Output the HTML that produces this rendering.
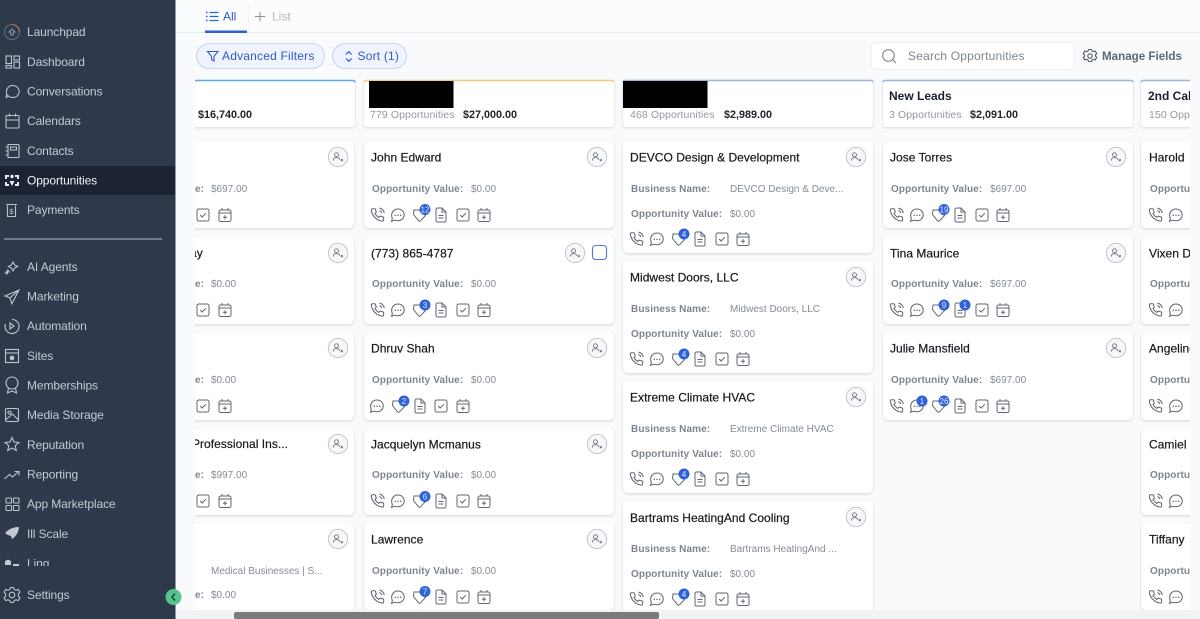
<!DOCTYPE html>
<html><head><meta charset="utf-8"><title>Opportunities</title>
<style>
html,body{margin:0;padding:0;width:1200px;height:619px;overflow:hidden;background:#f8fafc}
svg{position:absolute;left:0;top:0;display:block}
text{font-family:"Liberation Sans",sans-serif}
.s{font-size:12px;fill:#c3cad4;letter-spacing:-.1px}
.sa{font-size:12px;fill:#f2f4f7;letter-spacing:-.1px}
.n{font-size:12px;fill:#16181d;letter-spacing:.03px;stroke:#16181d;stroke-width:.2px}
.l{font-size:10px;font-weight:bold;fill:#7d8590;letter-spacing:.1px}
.v{font-size:10px;fill:#858c96}
.c{font-size:10.5px;fill:#9298a1;letter-spacing:.1px}
.m{font-size:10.8px;font-weight:bold;fill:#20242b}
.h{font-size:12px;font-weight:bold;fill:#1c2130}
.b{font-size:8px;fill:#dfe8ff;text-anchor:middle}
.f{font-size:12px;fill:#2f5cc9;letter-spacing:.2px}
.i{fill:none;stroke:#5d6673;stroke-width:1}
.si{fill:none;stroke:#bcc4cf;stroke-width:1.1}
</style></head><body>
<svg width="1200" height="619" viewBox="0 0 1200 619" xmlns="http://www.w3.org/2000/svg">
<defs>
<filter id="sh" x="-5%" y="-10%" width="110%" height="125%"><feDropShadow dx="0" dy="1" stdDeviation="1.4" flood-color="#1f2a3c" flood-opacity=".16"/></filter>
<clipPath id="bd"><rect x="195" y="76" width="995" height="536"/></clipPath>
<clipPath id="sb"><rect x="0" y="0" width="175" height="566"/></clipPath>
<g id="ph"><path transform="translate(-7 -7.5) scale(.62)" stroke-width="1.7" d="M15.05 5A5 5 0 0 1 19 8.95M15.05 1A9 9 0 0 1 23 8.94m-1 7.98v3a2 2 0 0 1-2.18 2 19.79 19.79 0 0 1-8.63-3.07 19.5 19.5 0 0 1-6-6 19.79 19.79 0 0 1-3.07-8.67A2 2 0 0 1 4.11 2h3a2 2 0 0 1 2 1.72 12.84 12.84 0 0 0 .7 2.81 2 2 0 0 1-.45 2.11L8.09 9.91a16 16 0 0 0 6 6l1.27-1.27a2 2 0 0 1 2.11-.45 12.84 12.84 0 0 0 2.81.7A2 2 0 0 1 22 16.92z"/></g>
<g id="ch"><path transform="scale(1.15)" stroke-width=".9" d="M0-5.2a5.3 5 0 0 1 0 10.2c-1 0-1.900-.2-2.700-.5L-5.600 5.500l.7-2.500a5 5 0 0 1-.6-2.500A5.400 5.400 0 0 1 0-5.200z"/><path d="M-2.700 .3h.01M0 .3h.01M2.700 .3h.01" stroke-width="1.500" stroke-linecap="round"/></g>
<g id="tg"><path d="M-6-5h5.500l6 5.500-5 5.300a1.500 1.500 0 0 1-2 0L-6.500-.5z"/></g>
<g id="dc"><path d="M-5-5.500a1.500 1.500 0 0 1 1.500-1.500H1l4 4v8.500A1.500 1.500 0 0 1 3.500 7h-7A1.500 1.500 0 0 1-5 5.500zM1-7v4h4M-2.500 0.500h5M-2.500 3h5"/></g>
<g id="ck"><rect x="-6" y="-6" width="12" height="12" rx="1.800"/><path d="M-2.800 0l2 2 3.600-3.800"/></g>
<g id="cl"><rect x="-6" y="-5" width="12" height="11.500" rx="1.800"/><path d="M-6-2h12M-3-7v2.500M3-7v2.500M0 .2v4M-2 2.200h4"/></g>
<g id="row" class="i"><use href="#ph" x="0"/><use href="#ch" x="21"/><use href="#tg" x="43"/><use href="#dc" x="64"/><use href="#ck" x="86"/><use href="#cl" x="107"/></g>
<g id="u"><circle r="9.700" fill="#f6f7f9" stroke="#bdc1c8" stroke-width=".9"/><circle cx="-1.500" cy="-2.200" r="2" fill="none" stroke="#6d7582" stroke-width=".9"/><path d="M-4.800 3.600c.3-2.200 1.600-3 3.300-3s2.900.8 3.300 2.100" fill="none" stroke="#6d7582" stroke-width=".9"/><path d="M2.800 2.200l2 2M4.800 2.200l-2 2" stroke="#6d7582" stroke-width=".9"/></g>
</defs>

<!-- main top -->
<rect x="175" width="1025" height="619" fill="#f8fafc"/>
<rect x="175" width="1025" height="32" fill="#fbfcfe"/>
<rect x="175" y="32" width="1025" height="1" fill="#e6e9ee"/>
<g stroke="#2f62d0" stroke-width="1.300" fill="none"><path d="M209.500 12.500h9M209.500 16.500h9M209.500 20.500h9"/></g>
<path d="M206 12.500h1.500M206 16.500h1.500M206 20.500h1.500" stroke="#2f62d0" stroke-width="1.500"/>
<text x="223" y="20.500" style="font-size:12px;fill:#2f5cc9">All</text>
<rect x="205" y="30.500" width="42" height="2.500" fill="#2f62d0"/>
<rect x="248" y="5" width="1" height="27" fill="#f1f3f6"/>
<path d="M260 11.500v10M255 16.500h10" stroke="#8a9099" stroke-width="1" fill="none"/>
<text x="272" y="20.500" style="font-size:12px;fill:#b4b8bf">List</text>

<rect x="196.500" y="43.500" width="128" height="25" rx="12.500" fill="#eef3fd" stroke="#c5d3f2"/>
<path d="M207.500 51.500h10.500l-4 4.800v4.700l-2.500-1.500v-3.200z" fill="none" stroke="#2f5cc9" stroke-width="1.100"/>
<text x="222" y="60" class="f">Advanced Filters</text>
<rect x="332.500" y="43.500" width="74" height="25" rx="12.500" fill="#eef3fd" stroke="#c5d3f2"/>
<path d="M346 54.500l2.800-2.800 2.800 2.800M346 58.500l2.800 2.800 2.800-2.800" fill="none" stroke="#2f5cc9" stroke-width="1.200"/>
<text x="357.500" y="60" class="f">Sort (1)</text>

<rect x="871.500" y="42.500" width="203" height="27" rx="5" fill="#fff" stroke="#eef0f4"/>
<circle cx="888.500" cy="55.500" r="5.800" fill="none" stroke="#7d8590" stroke-width="1.100"/><path d="M892.800 59.800l3.200 3.200" stroke="#7d8590" stroke-width="1.100"/>
<text x="908" y="60" style="font-size:12px;fill:#7d8590;letter-spacing:.2px">Search Opportunities</text>
<g fill="none" stroke="#555e6c" stroke-width="1.100"><circle cx="1090" cy="56" r="2.200"/><path d="M1088.500 49.500h3l.5 1.600 1.600.7 1.500-.8 1.700 2.600-1.300 1.100v1.600l1.300 1.100-1.700 2.600-1.500-.8-1.600.7-.5 1.600h-3l-.5-1.600-1.600-.7-1.500.8-1.700-2.600 1.300-1.100v-1.600l-1.300-1.100 1.700-2.600 1.500.8 1.600-.7z"/></g>
<text x="1102" y="60" style="font-size:11.6px;font-weight:bold;fill:#5f6876">Manage Fields</text>

<!-- board -->
<g clip-path="url(#bd)">
<g fill="#fff" filter="url(#sh)">
<rect x="150" y="80" width="205" height="47" rx="3"/><rect x="364" y="80" width="250" height="47" rx="3"/><rect x="623" y="80" width="250" height="47" rx="3"/><rect x="883" y="80" width="250" height="47" rx="3"/><rect x="1141" y="80" width="120" height="47" rx="3"/>
<rect x="150" y="141" width="204" height="87" rx="5"/><rect x="150" y="236" width="204" height="88" rx="5"/><rect x="150" y="332" width="204" height="88" rx="5"/><rect x="150" y="428" width="204" height="87" rx="5"/><rect x="150" y="523" width="204" height="110" rx="5"/>
<rect x="364" y="141" width="250" height="87" rx="5"/><rect x="364" y="236" width="250" height="88" rx="5"/><rect x="364" y="332" width="250" height="88" rx="5"/><rect x="364" y="428" width="250" height="87" rx="5"/><rect x="364" y="523" width="250" height="87" rx="5"/>
<rect x="623" y="141" width="250" height="112" rx="5"/><rect x="623" y="261" width="250" height="112" rx="5"/><rect x="623" y="381" width="250" height="112" rx="5"/><rect x="623" y="501" width="250" height="130" rx="5"/>
<rect x="883" y="141" width="250" height="87" rx="5"/><rect x="883" y="236" width="250" height="88" rx="5"/><rect x="883" y="332" width="250" height="88" rx="5"/>
<rect x="1141" y="141" width="120" height="87" rx="5"/><rect x="1141" y="236" width="120" height="88" rx="5"/><rect x="1141" y="332" width="120" height="88" rx="5"/><rect x="1141" y="428" width="120" height="87" rx="5"/><rect x="1141" y="523" width="120" height="87" rx="5"/>
</g>
<path d="M150 80.500H353a2 2 0 0 1 2 2" fill="none" stroke="#5aa8e2" stroke-width="1.500"/>
<path d="M364 82.500a2 2 0 0 1 2-2H612a2 2 0 0 1 2 2" fill="none" stroke="#efcd80" stroke-width="1.500"/>
<path d="M623 82.500a2 2 0 0 1 2-2H871a2 2 0 0 1 2 2" fill="none" stroke="#a4b2d8" stroke-width="1.500"/>
<path d="M883 82.500a2 2 0 0 1 2-2H1131a2 2 0 0 1 2 2" fill="none" stroke="#a4b2d8" stroke-width="1.500"/>
<path d="M1141 82.500a2 2 0 0 1 2-2H1261" fill="none" stroke="#a4b2d8" stroke-width="1.500"/>
<rect x="369" y="81" width="84.500" height="27" fill="#000"/><rect x="623" y="81" width="84.500" height="27" fill="#000"/>

<text x="198" y="118" class="m">$16,740.00</text>
<text x="370" y="118" class="c">779 Opportunities</text><text x="463" y="118" class="m">$27,000.00</text>
<text x="630" y="118" class="c">468 Opportunities</text><text x="724" y="118" class="m">$2,989.00</text>
<text x="889" y="100" class="h">New Leads</text><text x="889" y="118" class="c">3 Opportunities</text><text x="970" y="118" class="m">$2,091.00</text>
<text x="1148" y="100" class="h">2nd Call</text><text x="1149" y="118" class="c">150 Opportunities</text>

<!-- col 1 -->
<use href="#u" x="338" y="157"/><use href="#u" x="338" y="253"/><use href="#u" x="338" y="348"/><use href="#u" x="338" y="444"/><use href="#u" x="338" y="539"/>
<text x="190" y="257" class="n">ay</text><text x="192" y="448" class="n">Professional Ins...</text>
<text x="195" y="192" class="l">e:</text><text x="211" y="192" class="v">$697.00</text>
<text x="195" y="287" class="l">e:</text><text x="211" y="287" class="v">$0.00</text>
<text x="195" y="383" class="l">e:</text><text x="211" y="383" class="v">$0.00</text>
<text x="195" y="478" class="l">e:</text><text x="211" y="478" class="v">$997.00</text>
<text x="211" y="574" class="v">Medical Businesses | S...</text>
<text x="195" y="598" class="l">e:</text><text x="211" y="598" class="v">$0.00</text>
<g class="i"><use href="#ck" x="203" y="215"/><use href="#cl" x="225" y="215"/><use href="#ck" x="203" y="310"/><use href="#cl" x="225" y="310"/><use href="#ck" x="203" y="406"/><use href="#cl" x="225" y="406"/><use href="#ck" x="203" y="501"/><use href="#cl" x="225" y="501"/></g>

<!-- col 2 -->
<text x="371" y="161.500" class="n">John Edward</text><use href="#u" x="597" y="157"/>
<text x="372" y="192" class="l">Opportunity Value:</text><text x="471" y="192" class="v">$0.00</text><use href="#row" x="377" y="215"/>
<text x="371" y="257.500" class="n">(773) 865-4787</text><use href="#u" x="575" y="253"/><rect x="592.500" y="245.500" width="14" height="14" rx="3" fill="#fff" stroke="#4f7bd6" stroke-width="1.100"/>
<text x="372" y="287" class="l">Opportunity Value:</text><text x="471" y="287" class="v">$0.00</text><use href="#row" x="377" y="310"/>
<text x="371" y="352.500" class="n">Dhruv Shah</text><use href="#u" x="597" y="348"/>
<text x="372" y="383" class="l">Opportunity Value:</text><text x="471" y="383" class="v">$0.00</text>
<g class="i"><use href="#ch" x="377" y="406"/><use href="#tg" x="399" y="406"/><use href="#dc" x="420" y="406"/><use href="#ck" x="441" y="406"/><use href="#cl" x="463" y="406"/></g>
<text x="371" y="448.500" class="n">Jacquelyn Mcmanus</text><use href="#u" x="597" y="444"/>
<text x="372" y="478" class="l">Opportunity Value:</text><text x="471" y="478" class="v">$0.00</text><use href="#row" x="377" y="501"/>
<text x="371" y="543.500" class="n">Lawrence</text><use href="#u" x="597" y="539"/>
<text x="372" y="574" class="l">Opportunity Value:</text><text x="471" y="574" class="v">$0.00</text><use href="#row" x="377" y="597"/>

<!-- col 3 -->
<text x="630" y="161.500" class="n">DEVCO Design &amp; Development</text><use href="#u" x="856" y="157"/>
<text x="631" y="192" class="l">Business Name:</text><text x="730" y="192" class="v">DEVCO Design &amp; Deve...</text>
<text x="631" y="217" class="l">Opportunity Value:</text><text x="730" y="217" class="v">$0.00</text><use href="#row" x="636" y="239"/>
<text x="630" y="281.500" class="n">Midwest Doors, LLC</text><use href="#u" x="856" y="277"/>
<text x="631" y="312" class="l">Business Name:</text><text x="730" y="312" class="v">Midwest Doors, LLC</text>
<text x="631" y="337" class="l">Opportunity Value:</text><text x="730" y="337" class="v">$0.00</text><use href="#row" x="636" y="359"/>
<text x="630" y="401.500" class="n">Extreme Climate HVAC</text><use href="#u" x="856" y="397"/>
<text x="631" y="432" class="l">Business Name:</text><text x="730" y="432" class="v">Extreme Climate HVAC</text>
<text x="631" y="457" class="l">Opportunity Value:</text><text x="730" y="457" class="v">$0.00</text><use href="#row" x="636" y="479"/>
<text x="630" y="522" class="n">Bartrams HeatingAnd Cooling</text><use href="#u" x="856" y="517"/>
<text x="631" y="552" class="l">Business Name:</text><text x="730" y="552" class="v">Bartrams HeatingAnd ...</text>
<text x="631" y="577" class="l">Opportunity Value:</text><text x="730" y="577" class="v">$0.00</text><use href="#row" x="636" y="599"/>

<!-- col 4 -->
<text x="890" y="161.500" class="n">Jose Torres</text><use href="#u" x="1116" y="157"/>
<text x="891" y="192" class="l">Opportunity Value:</text><text x="990" y="192" class="v">$697.00</text><use href="#row" x="896" y="215"/>
<text x="890" y="257.500" class="n">Tina Maurice</text><use href="#u" x="1116" y="253"/>
<text x="891" y="287" class="l">Opportunity Value:</text><text x="990" y="287" class="v">$697.00</text><use href="#row" x="896" y="310"/>
<text x="890" y="352.500" class="n">Julie Mansfield</text><use href="#u" x="1116" y="348"/>
<text x="891" y="383" class="l">Opportunity Value:</text><text x="990" y="383" class="v">$697.00</text><use href="#row" x="896" y="406"/>

<!-- col 5 -->
<text x="1149" y="161.500" class="n">Harold</text><text x="1150" y="192" class="l">Opportunity</text>
<text x="1149" y="257.500" class="n">Vixen Davis</text><text x="1150" y="287" class="l">Opportunity</text>
<text x="1149" y="352.500" class="n">Angeline</text><text x="1150" y="383" class="l">Opportunity</text>
<text x="1149" y="448.500" class="n">Camiel</text><text x="1150" y="478" class="l">Opportunity</text>
<text x="1149" y="543.500" class="n">Tiffany</text><text x="1150" y="574" class="l">Opportunity</text>
<use href="#row" x="1155" y="215"/><use href="#row" x="1155" y="310"/><use href="#row" x="1155" y="406"/><use href="#row" x="1155" y="501"/><use href="#row" x="1155" y="597"/>

<!-- badges -->
<g fill="#2f62d9">
<circle cx="425" cy="209.500" r="5.500"/><circle cx="425" cy="305" r="5.500"/><circle cx="404" cy="401" r="5.500"/><circle cx="425" cy="496.500" r="5.500"/><circle cx="425" cy="591.500" r="5.500"/>
<circle cx="684" cy="234" r="5.500"/><circle cx="684" cy="354" r="5.500"/><circle cx="684" cy="474" r="5.500"/><circle cx="684" cy="594" r="5.500"/>
<circle cx="944" cy="209.500" r="5.500"/><circle cx="944" cy="305" r="5.500"/><circle cx="965" cy="305" r="5.500"/><circle cx="922" cy="401" r="5.500"/><circle cx="944" cy="401" r="5.500"/>
</g>
<text x="425" y="212.500" class="b">12</text><text x="425" y="308" class="b">3</text><text x="404" y="404" class="b">2</text><text x="425" y="499.500" class="b">6</text><text x="425" y="594.500" class="b">7</text>
<text x="684" y="237" class="b">4</text><text x="684" y="357" class="b">4</text><text x="684" y="477" class="b">4</text><text x="684" y="597" class="b">4</text>
<text x="944" y="212.500" class="b">19</text><text x="944" y="308" class="b">9</text><text x="965" y="308" class="b">1</text><text x="922" y="404" class="b">1</text><text x="944" y="404" class="b">26</text>
</g>

<!-- scrollbar -->
<rect x="175" y="610" width="1025" height="9" fill="#f1f2f4"/>
<rect x="234" y="612" width="425" height="7" rx="2" fill="#7b7b7b"/>

<!-- sidebar -->
<rect width="175.500" height="619" fill="#2e3a4c"/>
<path d="M0 166H173a2 2 0 0 1 2 2V193a2 2 0 0 1-2 2H0z" fill="#1c2333"/>
<g clip-path="url(#sb)">
<text x="27" y="36" class="s">Launchpad</text>
<text x="27" y="66" class="s">Dashboard</text>
<text x="27" y="95.500" class="s">Conversations</text>
<text x="27" y="125" class="s">Calendars</text>
<text x="27" y="155" class="s">Contacts</text>
<text x="27" y="184.500" class="sa">Opportunities</text>
<text x="27" y="214" class="s">Payments</text>
<text x="27" y="271" class="s">AI Agents</text>
<text x="27" y="300.500" class="s">Marketing</text>
<text x="27" y="330" class="s">Automation</text>
<text x="27" y="360" class="s">Sites</text>
<text x="27" y="389.500" class="s">Memberships</text>
<text x="27" y="419" class="s">Media Storage</text>
<text x="27" y="449" class="s">Reputation</text>
<text x="27" y="478.500" class="s">Reporting</text>
<text x="27" y="508" class="s">App Marketplace</text>
<text x="27" y="538" class="s">Ill Scale</text>
<text x="27" y="567.500" class="s">Ling</text>
<path d="M5 561l3-1.500 3 1.500v4H5zM13 564h6v2h-6z" fill="#c3cad4"/>
</g>
<rect x="4" y="238.500" width="158" height="1" fill="#b4bbc6"/>
<text x="27" y="599" class="s">Settings</text>

<g class="si">
<circle cx="12" cy="32" r="7.500" stroke="#5f6a7a"/><path d="M12 24.500a7.500 7.500 0 0 1 7.500 7.500" stroke="#b5784a"/><path d="M9 32l3-3 3 3h-1.700v3h-2.600v-3z" stroke="#8b94a1"/>
<rect x="6" y="56" width="5.500" height="7.500"/><rect x="14" y="56" width="5.500" height="4"/><rect x="6" y="65.500" width="5.500" height="2.500"/><rect x="14" y="62" width="5.500" height="6"/>
<path d="M13 85.500a6.500 6 0 1 1-5.200 10l-1.800 2.500.8-4.500a6.500 6 0 0 1 6.200-8z"/>
<path d="M7 115.500h11a1 1 0 0 1 1 1V127a1 1 0 0 1-1 1H7a1 1 0 0 1-1-1v-10.500a1 1 0 0 1 1-1zM6 120h13M9.500 113.500v3M15.500 113.500v3"/>
<path d="M8 144.500h10a1 1 0 0 1 1 1v11a1 1 0 0 1-1 1H8zM8 147h-2.500M8 151h-2.500M8 155h-2.500M10.500 147h6v3h-6z"/>
<path d="M7.500 205.500v11h8v-11M6 204.500h11" />
<path d="M5 274l4-4M5 272h5M7.500 269.500v5M13 262l1.600 3 3 1.500-3 1.500-1.600 3-1.600-3-3-1.500 3-1.500z"/>
<path d="M19 290l-14 6 5 1.800 1.800 6z M10 297.800L19 290"/>
<path d="M12 319.500a7 7 0 1 1-6.500 4.500"/><path d="M10 323l4 3-4 3z"/>
<rect x="5.500" y="349.500" width="13" height="13"/><path d="M5.500 353h13"/><circle cx="12" cy="358" r="1.800" fill="#bcc4cf"/>
<circle cx="12" cy="383" r="6"/><path d="M8.500 388l-1 5 4.500-2 4.500 2-1-5"/>
<rect x="5.500" y="408.500" width="13" height="13" rx="1.500"/><circle cx="9.500" cy="412.500" r="1.500"/><path d="M5.500 420l7-6 6 6"/>
<path d="M12 437.500l2 4.500 4.900.5-3.700 3.200 1.100 4.800-4.300-2.500-4.300 2.500 1.100-4.800-3.700-3.200 4.900-.5z"/>
<path d="M4.500 479l5-4.500 3 2.500 6-5.500M14.500 471.500h4.500v4"/>
<rect x="6" y="498" width="5.500" height="5" rx=".8"/><rect x="13.500" y="498" width="5.500" height="5" rx=".8"/><rect x="6" y="505.500" width="5.500" height="5" rx=".8"/><rect x="13.500" y="505.500" width="5.500" height="5" rx=".8"/>
<circle cx="12" cy="595" r="2.800"/><path d="M10.500 587.500h3l.7 2 2 .8 1.900-1 1.900 2.900-1.600 1.400v2.800l1.600 1.400-1.900 2.900-1.900-1-2 .8-.7 2h-3l-.7-2-2-.8-1.900 1-1.900-2.900 1.600-1.400v-2.800l-1.600-1.400 1.900-2.900 1.900 1 2-.8z"/>
</g>
<g fill="#e6eaef"><path d="M5 175h4v2H7v2H5zM15 175h4v4h-2v-2h-2zM5 182h2v2h2v2H5zM17 182h2v4h-4v-2h2z"/><circle cx="12" cy="176.500" r="1.700"/><path d="M9.500 181h5l-2.500 5z"/></g>
<text x="11.500" y="214" style="font-size:7.500px;fill:#bcc4cf;text-anchor:middle">$</text>
<path d="M5 533c4-4 8-6 14-6-.5 6-3 9-7 12l-1-3-3-1z" fill="#c3cad4"/>
<circle cx="173.500" cy="597" r="8" fill="#55c48c"/>
<path d="M175 593.500l-3 3.500 3 3.500" fill="none" stroke="#1f4a3a" stroke-width="1.500"/>
</svg>
</body></html>
